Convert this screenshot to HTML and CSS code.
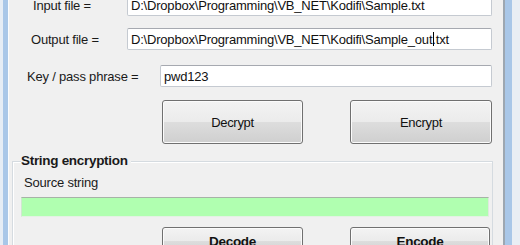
FILE: index.html
```html
<!DOCTYPE html>
<html>
<head>
<meta charset="utf-8">
<link rel="stylesheet" href="styles.css">
</head>
<body>
<div class="window">
  <div class="frame-left"></div>
  <div class="content">
    <div class="row row-input">
      <span class="label">Input file =</span>
      <div class="textbox tb-wide">D:\Dropbox\Programming\VB_NET\Kodifi\Sample.txt</div>
    </div>
    <div class="row row-output">
      <span class="label">Output file =</span>
      <div class="textbox tb-wide">D:\Dropbox\Programming\VB_NET\Kodifi\Sample_out<span class="caret">.</span>txt</div>
    </div>
    <div class="row row-key">
      <span class="label">Key / pass phrase =</span>
      <div class="textbox tb-key">pwd123</div>
    </div>
    <div class="buttons buttons-file">
      <div class="btn btn-left">Decrypt</div>
      <div class="btn btn-right">Encrypt</div>
    </div>
    <div class="group">
      <div class="group-title">String encryption</div>
      <div class="group-label">Source string</div>
      <div class="greenbox"></div>
      <div class="group-bottom">
        <span class="label-faint">Result string</span>
        <div class="buttons buttons-string">
          <div class="btn btn-bold btn-left">Decode</div>
          <div class="btn btn-bold btn-right">Encode</div>
        </div>
      </div>
    </div>
  </div>
  <div class="frame-right"></div>
</div>
</body>
</html>
```
FILE: styles.css
```css
html, body {
  margin: 0;
  padding: 0;
  background: #f0f0f0;
}
body {
  font-family: "Liberation Sans", Arial, sans-serif;
  font-size: 13px;
  color: #1a1a1a;
}
.window {
  width: 520px;
  height: 245px;
  overflow: hidden;
  display: flex;
  background: #f0f0f0;
}
.frame-left {
  width: 5px;
  flex: none;
  border-left: 3px solid #e6edf5;
  background: #a9c7e8;
}
.frame-right {
  width: 7px;
  flex: none;
  border-left: 2px solid #9da7b1;
  border-right: 8px solid #e9eef4;
  background: #a9c7e8;
}
.content {
  flex: 1;
  display: flex;
  flex-direction: column;
  border-left: 1px solid #fafcfe;
}
.row {
  display: flex;
  align-items: center;
  height: 22px;
}
.row-input { margin-top: -6px; }
.row-output { margin-top: 12px; }
.row-key { margin-top: 15px; }
.row-input .label { width: 94px; padding-left: 24px; }
.row-output .label { width: 96px; padding-left: 22px; }
.row-key .label { width: 133px; padding-left: 18px; }
.label {
  letter-spacing: -0.2px;
  white-space: nowrap;
}
.textbox {
  box-sizing: border-box;
  height: 22px;
  background: #ffffff;
  border: 1px solid #c5cad1;
  border-top-color: #a6a9b0;
  border-radius: 2px;
  padding: 3px 3px 0 3px;
  white-space: nowrap;
  overflow: hidden;
  letter-spacing: -0.2px;
  color: #111;
}
.tb-wide { width: 365px; }
.tb-key { width: 332px; }
.caret {
  position: relative;
}
.caret::after {
  content: "";
  position: absolute;
  left: 1px;
  top: 0;
  width: 1px;
  height: 14px;
  background: #000;
}
.buttons {
  display: flex;
  gap: 47px;
  padding-left: 153px;
}
.buttons-file { margin-top: 13px; }
.btn {
  box-sizing: border-box;
  width: 141px;
  height: 44px;
  border: 1px solid #707070;
  border-radius: 3px;
  background: linear-gradient(to bottom, #f3f3f3 0%, #ebebeb 50%, #dddddd 51%, #cfcfcf 100%);
  box-shadow: inset 0 0 0 1px #fbfbfb;
  display: flex;
  align-items: center;
  justify-content: center;
  letter-spacing: -0.3px;
  color: #111;
}
.btn-right { width: 142px; }
.btn-bold {
  font-weight: bold;
  font-size: 13.5px;
  height: 28px;
  padding-top: 1px;
}
.group {
  margin-top: 17px;
  margin-left: 3px;
  width: 479px;
  border: 1px solid #d5dbe0;
  border-bottom: none;
  box-shadow: inset 1px 1px 0 #ffffff;
  display: flex;
  flex-direction: column;
}
.group-title {
  align-self: flex-start;
  margin-top: -9px;
  margin-left: 8px;
  padding-right: 3px;
  background: #f0f0f0;
  font-weight: bold;
  font-size: 13.5px;
  letter-spacing: -0.3px;
  line-height: 16px;
}
.group-label {
  margin-top: 6px;
  margin-left: 11px;
  letter-spacing: -0.2px;
  line-height: 16px;
}
.greenbox {
  box-sizing: border-box;
  margin-top: 6px;
  margin-left: 8px;
  width: 468px;
  height: 20px;
  background: #b0ffb0;
  border-top: 1px solid #a7b3a7;
  border-left: 1px solid #cfe8cf;
  border-right: 1px solid #dfe9df;
  border-bottom: 1px solid #e3f2e3;
}
.group-bottom {
  display: flex;
  align-items: flex-start;
  margin-top: 10px;
}
.group-bottom .buttons {
  padding-left: 0;
  margin-left: 75px;
}
.label-faint {
  width: 66px;
  padding-left: 8px;
  padding-top: 15px;
  color: #555;
  white-space: nowrap;
  overflow: hidden;
}
.buttons-string .btn-right { width: 140px; }
```
